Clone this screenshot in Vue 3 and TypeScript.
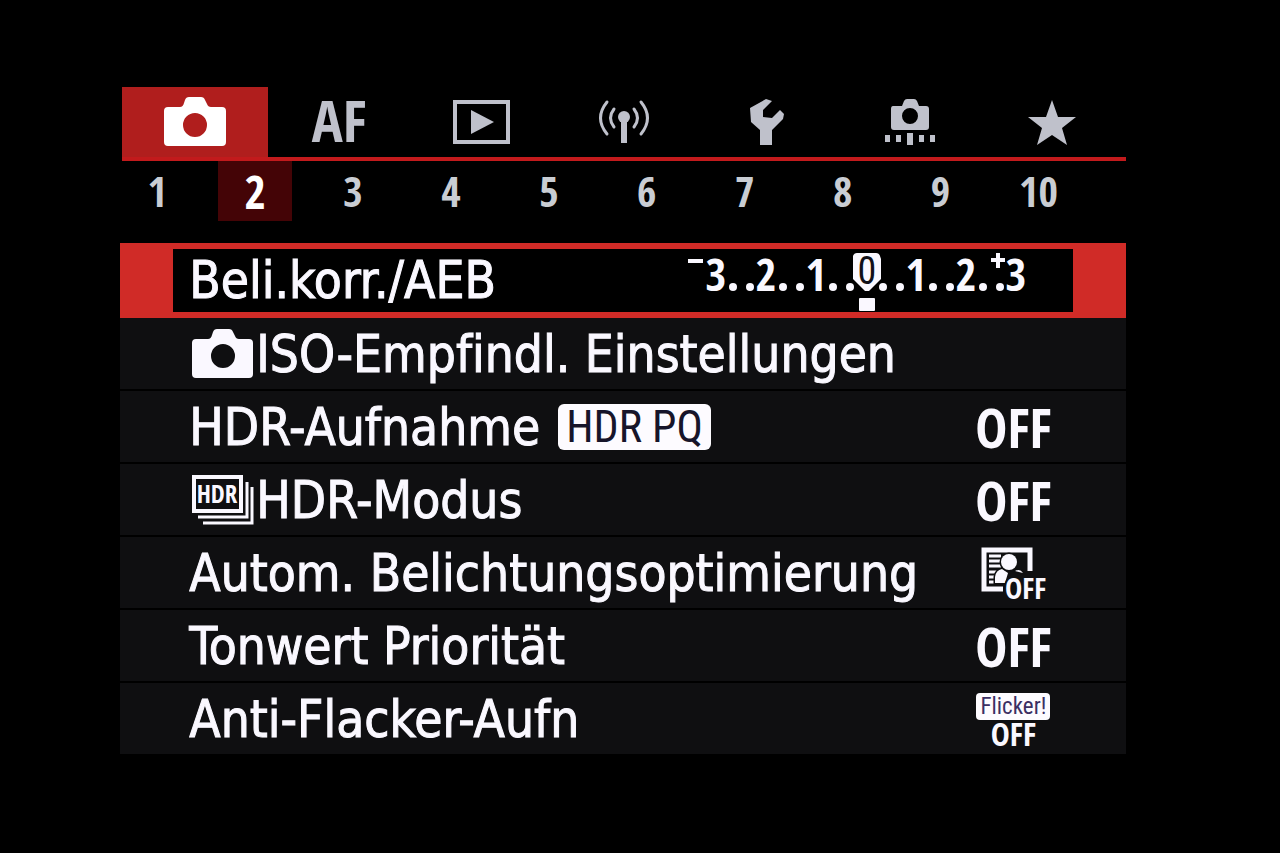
<script setup lang="ts">
import { ref } from 'vue'

type Kind = 'scale' | 'none' | 'off' | 'alo' | 'flicker'
interface Item {
  label: string
  kind: Kind
  icon?: 'camera' | 'hdr'
  badge?: string
}

const tabs = ['Aufnahme', 'AF', 'Wiedergabe', 'Drahtlos', 'Einstellungen', 'Individual', 'My Menu']
const activeTab = ref(0)
const pages = [1, 2, 3, 4, 5, 6, 7, 8, 9, 10]
const activePage = ref(2)
const selected = ref(0)

const items: Item[] = [
  { label: 'Beli.korr./AEB', kind: 'scale' },
  { label: 'ISO-Empfindl. Einstellungen', kind: 'none', icon: 'camera' },
  { label: 'HDR-Aufnahme', kind: 'off', badge: 'HDR PQ' },
  { label: 'HDR-Modus', kind: 'off', icon: 'hdr' },
  { label: 'Autom. Belichtungsoptimierung', kind: 'alo' },
  { label: 'Tonwert Priorität', kind: 'off' },
  { label: 'Anti-Flacker-Aufn', kind: 'flicker' },
]

const digits = ['3', '2', '1', '0', '1', '2', '3'].map((t, i) => ({ t, x: 37 + i * 50 }))
const dots = [0, 1, 2, 3, 4, 5].flatMap((i) => [54 + i * 50, 71 + i * 50])
</script>

<template>
  <main class="screen">
    <nav class="tabs" aria-label="Menü">
      <button
        v-for="(tab, i) in tabs"
        :key="tab"
        type="button"
        class="tab"
        :class="{ active: i === activeTab }"
        :aria-label="tab"
        @click="activeTab = i"
      >
        <svg v-if="i === 0" width="62" height="50" viewBox="0 0 62 50">
          <path fill="currentColor" fill-rule="evenodd" d="M4 10H16Q19 10 20 6L21 3Q22 0 25 0H37Q40 0 41 3L43 7Q44 10 47 10H58Q62 10 62 14V45Q62 49 58 49H4Q0 49 0 45V14Q0 10 4 10ZM31 16A12 12 0 1 0 31 40A12 12 0 1 0 31 16Z" />
        </svg>
        <span v-else-if="i === 1" class="af">AF</span>
        <svg v-else-if="i === 2" width="58" height="44" viewBox="0 0 58 44">
          <rect x="2" y="2" width="53" height="40" fill="none" stroke="currentColor" stroke-width="4" />
          <path fill="currentColor" d="M18 10L41 22L18 34Z" />
        </svg>
        <svg v-else-if="i === 3" width="50" height="44" viewBox="0 0 50 44">
          <g fill="none" stroke="currentColor" stroke-width="3" stroke-linecap="round">
            <path d="M8 2Q-5 18 8 34M15 9Q8 18 15 27M42 2Q55 18 42 34M35 9Q42 18 35 27" />
          </g>
          <circle cx="25" cy="17" r="6" fill="currentColor" />
          <path fill="currentColor" d="M22 17H28V43H22Z" />
        </svg>
        <svg v-else-if="i === 4" width="36" height="47" viewBox="0 0 36 47">
          <path fill="currentColor" d="M1 9L17 0L23 2L14 11V18L23 19L31 11L35 15L34 20L23 31V46H11V31L2 23Z" />
        </svg>
        <svg v-else-if="i === 5" width="50" height="47" viewBox="0 0 50 47">
          <path fill="currentColor" fill-rule="evenodd" d="M8 7H17L19 2Q20 0 22 0H29Q31 0 32 2L34 7H41Q44 7 44 10V28Q44 31 41 31H9Q6 31 6 28V10Q6 7 8 7ZM25 9A8 8 0 1 0 25 25A8 8 0 1 0 25 9Z" />
          <path fill="currentColor" d="M0 36H5V43H0ZM11 36H16V43H11ZM22 34H28V46H22ZM34 36H39V43H34ZM45 36H50V43H45Z" />
        </svg>
        <svg v-else width="48" height="45" viewBox="0 0 48 45">
          <path fill="currentColor" d="M24 0L30 17H48L34 28L39 45L24 35L9 45L14 28L0 17H18Z" />
        </svg>
      </button>
    </nav>

    <nav class="pages" aria-label="Seite">
      <button
        v-for="p in pages"
        :key="p"
        type="button"
        class="page"
        :class="{ active: p === activePage }"
        @click="activePage = p"
      >
        {{ p }}
      </button>
    </nav>

    <section class="list">
      <button
        v-for="(item, i) in items"
        :key="item.label"
        type="button"
        class="row"
        :class="{ selected: i === selected }"
        @click="selected = i"
      >
        <span class="inner">
          <svg v-if="item.icon === 'camera'" class="lead" width="62" height="50" viewBox="0 0 62 50">
            <path fill="currentColor" fill-rule="evenodd" d="M4 10H16Q19 10 20 6L21 3Q22 0 25 0H37Q40 0 41 3L43 7Q44 10 47 10H57Q61 10 61 14V45Q61 49 57 49H4Q0 49 0 45V14Q0 10 4 10ZM31 15A12 12 0 1 0 31 39A12 12 0 1 0 31 15Z" />
          </svg>
          <svg v-else-if="item.icon === 'hdr'" class="lead" width="62" height="50" viewBox="0 0 62 50">
            <path fill="none" stroke="currentColor" stroke-width="4" d="M2 2H49V36H2Z" />
            <path fill="none" stroke="currentColor" stroke-width="3" d="M6 42H55V7M11 48H60V12" />
            <text class="hdr-text" x="25" y="28" text-anchor="middle">HDR</text>
          </svg>
          <span class="label">{{ item.label }}</span>
          <span v-if="item.badge" class="badge">{{ item.badge }}</span>

          <svg v-if="item.kind === 'scale'" class="scale" width="350" height="62" viewBox="0 0 350 62">
            <path fill="currentColor" d="M174 6Q175 3 178 3H197Q200 3 201 6L202 9V29L190 41H186L174 29Z" />
            <rect x="180" y="48" width="16" height="13" rx="1" fill="currentColor" />
            <path fill="none" stroke="currentColor" stroke-width="4" d="M9 11H24M312 10H326M319 3V18" />
            <text
              v-for="(d, n) in digits"
              :key="n"
              class="digit"
              :class="{ zero: n === 3 }"
              :x="n === 3 ? 188 : d.x"
              :y="n === 3 ? 34 : 41"
              text-anchor="middle"
            >{{ d.t }}</text>
            <circle v-for="x in dots" :key="x" :cx="x" cy="37" r="4" fill="currentColor" />
          </svg>

          <span v-else-if="item.kind === 'off'" class="value">OFF</span>

          <span v-else-if="item.kind === 'alo'" class="value">
            <svg class="alo" width="64" height="54" viewBox="0 0 64 54">
              <path fill="none" stroke="currentColor" stroke-width="5" d="M22 43H3V4H49V25" />
              <path stroke="currentColor" stroke-width="3" d="M8 10H20M8 15H19M8 20H20M8 26H16M8 31H14M8 36H14" />
              <path class="cut" d="M14 37V31Q15 24 21 23L27 27L24 37ZM34 25Q39 22 42 27Z" />
              <circle class="cut" cx="28" cy="16" r="8" />
              <text class="alo-off" x="24" y="53">OFF</text>
            </svg>
          </span>

          <span v-else-if="item.kind === 'flicker'" class="value flicker">
            <span class="flicker-tag">Flicker!</span>
            <span class="flicker-off">OFF</span>
          </span>
        </span>
      </button>
    </section>
  </main>
</template>

<style>
html,
body {
  margin: 0;
  background: #000;
}
</style>

<style scoped>
.screen {
  --condensed: 'Open Sans Condensed', 'Roboto Condensed', 'Open Sans', sans-serif;
  --thin: 'Roboto Condensed', 'Open Sans Condensed', Roboto, sans-serif;
  box-sizing: border-box;
  min-height: 100vh;
  padding: 87px 12% 80px 9.4%;
  background: #000;
  color: #faf8ff;
  font-family: 'DejaVu Sans Condensed', 'Open Sans', sans-serif;
}

button {
  margin: 0;
  padding: 0;
  border: 0;
  background: none;
  color: inherit;
  font: inherit;
  cursor: pointer;
}

svg {
  overflow: visible;
}

.tabs {
  display: grid;
  grid-template-columns: 146fr repeat(6, 143fr);
  height: 74px;
  margin-left: 2px;
  padding-right: 3px;
  box-sizing: border-box;
  border-bottom: 4px solid #c21a1c;
  color: #bfc1cb;
}

.tab {
  display: flex;
  align-items: center;
  justify-content: center;
}

.tab.active {
  background: #b01e1d;
  color: #fff;
}

.af {
  padding-bottom: 4px;
  font-family: var(--condensed);
  font-size: 58px;
  line-height: 64px;
  font-weight: 700;
}

.pages {
  display: grid;
  grid-template-columns: repeat(10, 1fr);
  gap: 24px;
  padding-right: 51px;
  margin-bottom: 22px;
}

.page {
  height: 60px;
  font-family: var(--condensed);
  font-size: 42px;
  line-height: 60px;
  font-weight: 700;
  color: #c9cdd3;
}

.page.active {
  background: #440406;
  color: #fff;
  font-size: 46px;
  line-height: 58px;
}

.list {
  display: flex;
  flex-direction: column;
}

.row {
  display: block;
  box-sizing: border-box;
  width: 100%;
  height: 73px;
  border-bottom: 2px solid #000;
  background: #0f0f11;
  text-align: left;
}

.row.selected {
  height: 75px;
  padding: 6px 53px;
  border: 0;
  background: #d02b27;
}

.inner {
  display: flex;
  align-items: center;
  height: 100%;
  box-sizing: border-box;
  padding: 0 73px 0 69px;
}

.selected .inner {
  padding: 0 44px 0 16px;
  background: #000;
}

.lead {
  flex: none;
  margin: 0 2px 0 3px;
}

.label {
  padding-top: 2px;
  font-size: 51px;
  line-height: 68px;
  font-variant-ligatures: none;
  white-space: nowrap;
  -webkit-text-stroke: 1px currentColor;
}

.selected .label {
  padding-top: 0;
}

.badge {
  margin-left: 18px;
  padding: 0 8px;
  border-radius: 6px;
  background: #fdfbff;
  color: #17152a;
  font-family: var(--thin);
  font-size: 44px;
  line-height: 46px;
  font-weight: 400;
  white-space: nowrap;
}

.scale {
  flex: none;
  margin-left: auto;
}

.digit {
  fill: currentColor;
  font-family: var(--condensed);
  font-size: 45px;
  font-weight: 700;
}

.digit.zero {
  fill: #111018;
  font-family: var(--thin);
  font-size: 38px;
  font-weight: 400;
}

.value {
  display: flex;
  flex: none;
  justify-content: center;
  width: 80px;
  margin-left: auto;
  font-family: var(--condensed);
  font-size: 54px;
  line-height: 70px;
  font-weight: 700;
}

.hdr-text {
  fill: currentColor;
  font-family: var(--condensed);
  font-size: 25px;
  font-weight: 700;
}

.alo {
  flex: none;
}

.cut {
  fill: currentColor;
  stroke: #0f0f11;
  stroke-width: 3px;
  paint-order: stroke;
}

.alo-off {
  fill: currentColor;
  stroke: #0f0f11;
  stroke-width: 4px;
  paint-order: stroke;
  font-family: var(--condensed);
  font-size: 29px;
  font-weight: 700;
}

.flicker {
  flex-direction: column;
  align-items: center;
  padding-top: 4px;
}

.flicker-tag {
  padding: 0 4px;
  border-radius: 4px;
  background: #fdfbff;
  color: #3b2f63;
  font-family: var(--thin);
  font-size: 23px;
  line-height: 27px;
  font-weight: 400;
}

.flicker-off {
  font-size: 32px;
  line-height: 28px;
}
</style>
